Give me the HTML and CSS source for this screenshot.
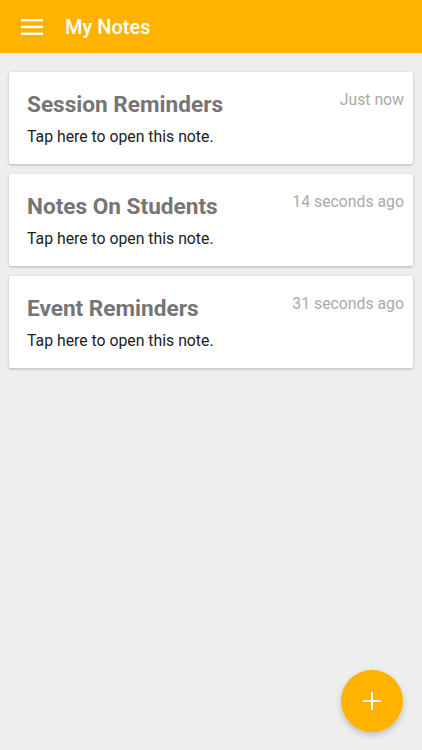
FILE: index.html
```html
<!DOCTYPE html>
<html lang="en">
<head>
    <meta charset="UTF-8">
    <meta name="viewport" content="width=device-width, initial-scale=1.0">
    <title>My Notes</title>
    <link rel="stylesheet" href="styles.css">
</head>
<body>
    <!-- Toolbar -->
    <header class="toolbar">
        <svg class="menu-icon" width="22" height="16" viewBox="0 0 22 16">
            <rect x="0" y="0" width="22" height="2.4" fill="#fff"/>
            <rect x="0" y="6.8" width="22" height="2.4" fill="#fff"/>
            <rect x="0" y="13.6" width="22" height="2.4" fill="#fff"/>
        </svg>
        <span class="toolbar-title">My Notes</span>
    </header>

    <!-- Notes list -->
    <main class="notes">
        <div class="note-card">
            <div class="note-top">
                <h3 class="note-title">Session Reminders</h3>
                <span class="note-time">Just now</span>
            </div>
            <p class="note-body">Tap here to open this note.</p>
        </div>
        <div class="note-card">
            <div class="note-top">
                <h3 class="note-title">Notes On Students</h3>
                <span class="note-time">14 seconds ago</span>
            </div>
            <p class="note-body">Tap here to open this note.</p>
        </div>
        <div class="note-card">
            <div class="note-top">
                <h3 class="note-title">Event Reminders</h3>
                <span class="note-time">31 seconds ago</span>
            </div>
            <p class="note-body">Tap here to open this note.</p>
        </div>
    </main>

    <button class="fab">
        <svg width="18" height="18" viewBox="0 0 18 18">
            <rect x="8" y="0" width="2" height="18" fill="#fff"/>
            <rect x="0" y="8" width="18" height="2" fill="#fff"/>
        </svg>
    </button>
</body>
</html>
```

FILE: styles.css
```css
body {
    font-family: Roboto, 'Noto Sans', sans-serif;
    margin: 0;
    padding: 0;
    background-color: #EEEEEE;
    min-height: 100vh;
    box-sizing: border-box;
}

.toolbar {
    display: flex;
    align-items: center;
    height: 53px;
    padding: 0 21px;
    background-color: #FFB300;
    box-sizing: border-box;
}

.menu-icon {
    margin-right: 22px;
}

.toolbar-title {
    color: #FFFFFF;
    font-size: 20px;
    font-weight: 500;
}

.notes {
    display: flex;
    flex-direction: column;
    gap: 10px;
    padding: 19px 9px 0 9px;
}

.note-card {
    background-color: #FFFFFF;
    border-radius: 2px;
    box-shadow: 0 1px 3px rgba(0, 0, 0, 0.25);
    height: 92px;
    padding: 19px 9px 0 18px;
    box-sizing: border-box;
}

.note-top {
    display: flex;
    justify-content: space-between;
    align-items: flex-start;
}

.note-title {
    margin: 0;
    font-size: 22.6px;
    font-weight: 700;
    color: #757575;
    line-height: 28px;
}

.note-time {
    font-size: 15.8px;
    color: #AAAAAA;
    line-height: 20px;
    margin-top: -1px;
}

.note-body {
    margin: 8px 0 0 0;
    font-size: 15.8px;
    color: #212121;
    line-height: 20px;
}

.fab {
    position: fixed;
    right: 19px;
    bottom: 18px;
    width: 62px;
    height: 62px;
    border: none;
    border-radius: 50%;
    background-color: #FFB300;
    box-shadow: 0 3px 6px rgba(0, 0, 0, 0.2);
    display: flex;
    align-items: center;
    justify-content: center;
    padding: 0;
}
```
